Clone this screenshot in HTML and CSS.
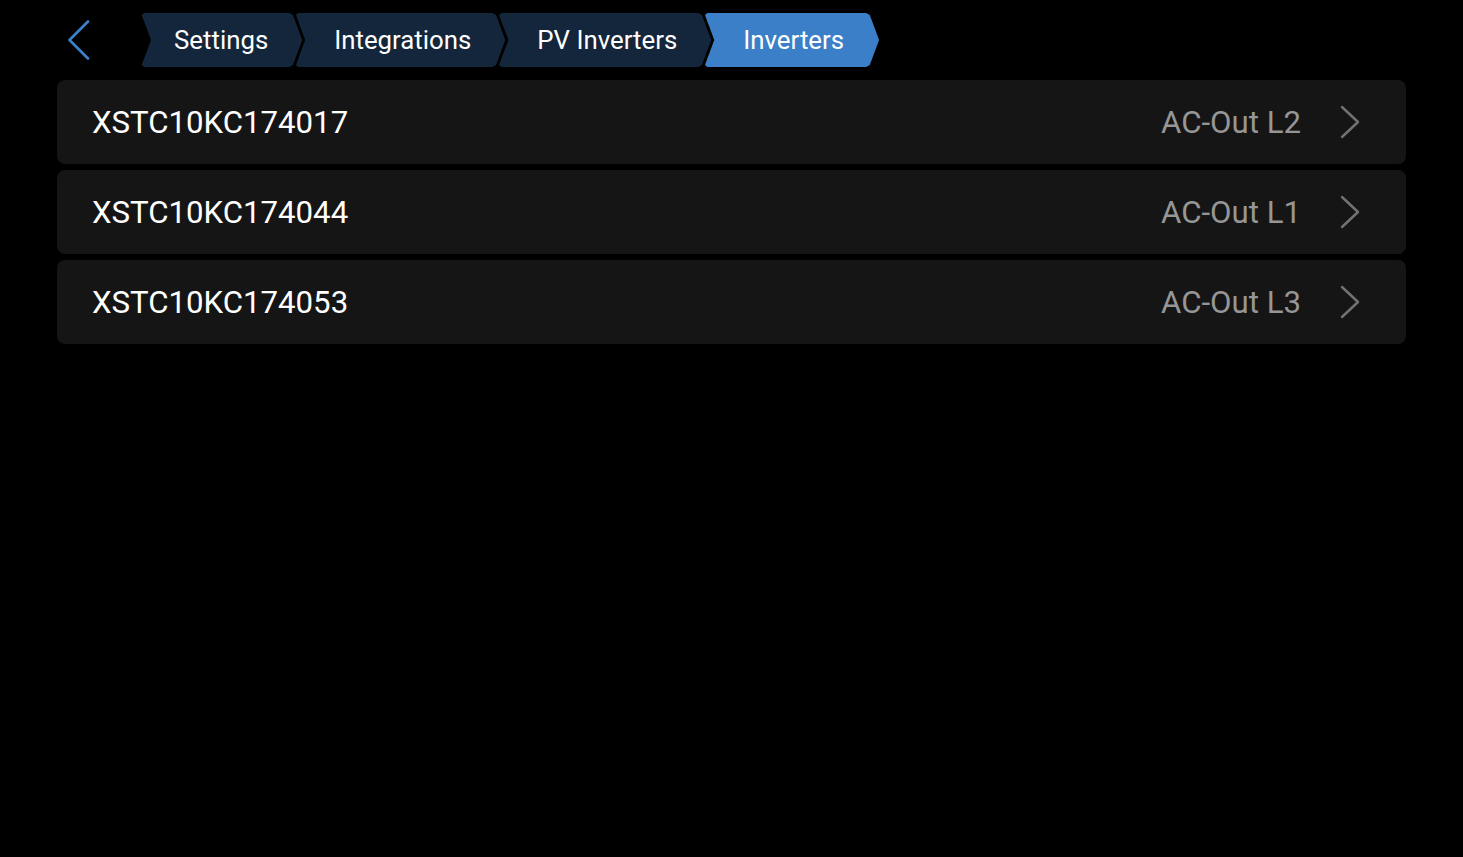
FILE: index.html
```html
<!DOCTYPE html>
<html>
<head>
<meta charset="utf-8">
<link rel="stylesheet" href="styles.css">
</head>
<body>
<div class="page">
  <header class="header">
    <div class="back">
      <svg width="24" height="40" viewBox="0 0 24 40"><polyline points="21,1.5 2.5,20 21,38.5" fill="none" stroke="#3b82cc" stroke-width="2.6" stroke-linecap="round" stroke-linejoin="round"/></svg>
    </div>
    <nav class="crumbs">
      <div class="crumb first">Settings</div>
      <div class="crumb">Integrations</div>
      <div class="crumb">PV Inverters</div>
      <div class="crumb active">Inverters</div>
    </nav>
  </header>
  <div class="list">
    <div class="row">
      <span class="name">XSTC10KC174017</span>
      <span class="value">AC-Out L2</span>
      <svg class="chev" width="20" height="34" viewBox="0 0 20 34"><polyline points="2,2 18,17 2,32" fill="none" stroke="#727272" stroke-width="2.4" stroke-linecap="round" stroke-linejoin="round"/></svg>
    </div>
    <div class="row">
      <span class="name">XSTC10KC174044</span>
      <span class="value">AC-Out L1</span>
      <svg class="chev" width="20" height="34" viewBox="0 0 20 34"><polyline points="2,2 18,17 2,32" fill="none" stroke="#727272" stroke-width="2.4" stroke-linecap="round" stroke-linejoin="round"/></svg>
    </div>
    <div class="row">
      <span class="name">XSTC10KC174053</span>
      <span class="value">AC-Out L3</span>
      <svg class="chev" width="20" height="34" viewBox="0 0 20 34"><polyline points="2,2 18,17 2,32" fill="none" stroke="#727272" stroke-width="2.4" stroke-linecap="round" stroke-linejoin="round"/></svg>
    </div>
  </div>
</div>
</body>
</html>
```
FILE: styles.css
```css
html, body {
  margin: 0;
  padding: 0;
  background: #000;
  height: 100%;
}
body {
  font-family: Roboto, "Liberation Sans", sans-serif;
  color: #fff;
}
.page {
  padding: 13px 57px 0 57px;
}
.header {
  display: flex;
  align-items: center;
  height: 54px;
}
.back {
  width: 84px;
  height: 54px;
  display: flex;
  align-items: center;
  padding-left: 10px;
  box-sizing: border-box;
}
.back svg {
  display: block;
}
.crumbs {
  display: flex;
  height: 54px;
}
.crumb {
  height: 54px;
  display: flex;
  align-items: center;
  padding: 0 34px 0 39px;
  margin-left: -7px;
  background: #14263b;
  color: #fff;
  font-size: 25.8px;
  clip-path: polygon(3px 0, calc(100% - 13px) 0, calc(100% - 9.3px) 2px, 100% 50%, calc(100% - 9.3px) calc(100% - 2px), calc(100% - 13px) 100%, 3px 100%, 0.7px calc(100% - 2px), 10px 50%, 0.7px 2px);
}
.crumb.first {
  margin-left: 0;
  padding-left: 33px;
}
.crumb.active {
  background: #3a7fc8;
  padding-right: 35px;
}
.list {
  margin-top: 13px;
  display: flex;
  flex-direction: column;
  gap: 6px;
}
.row {
  height: 84px;
  background: #151515;
  border-radius: 8px;
  display: flex;
  align-items: center;
  padding: 0 46px 0 35px;
}
.name {
  font-size: 31.2px;
  color: #fff;
  flex: 1;
}
.value {
  font-size: 31.2px;
  color: #969696;
  margin-right: 39px;
}
.chev {
  display: block;
}
```
